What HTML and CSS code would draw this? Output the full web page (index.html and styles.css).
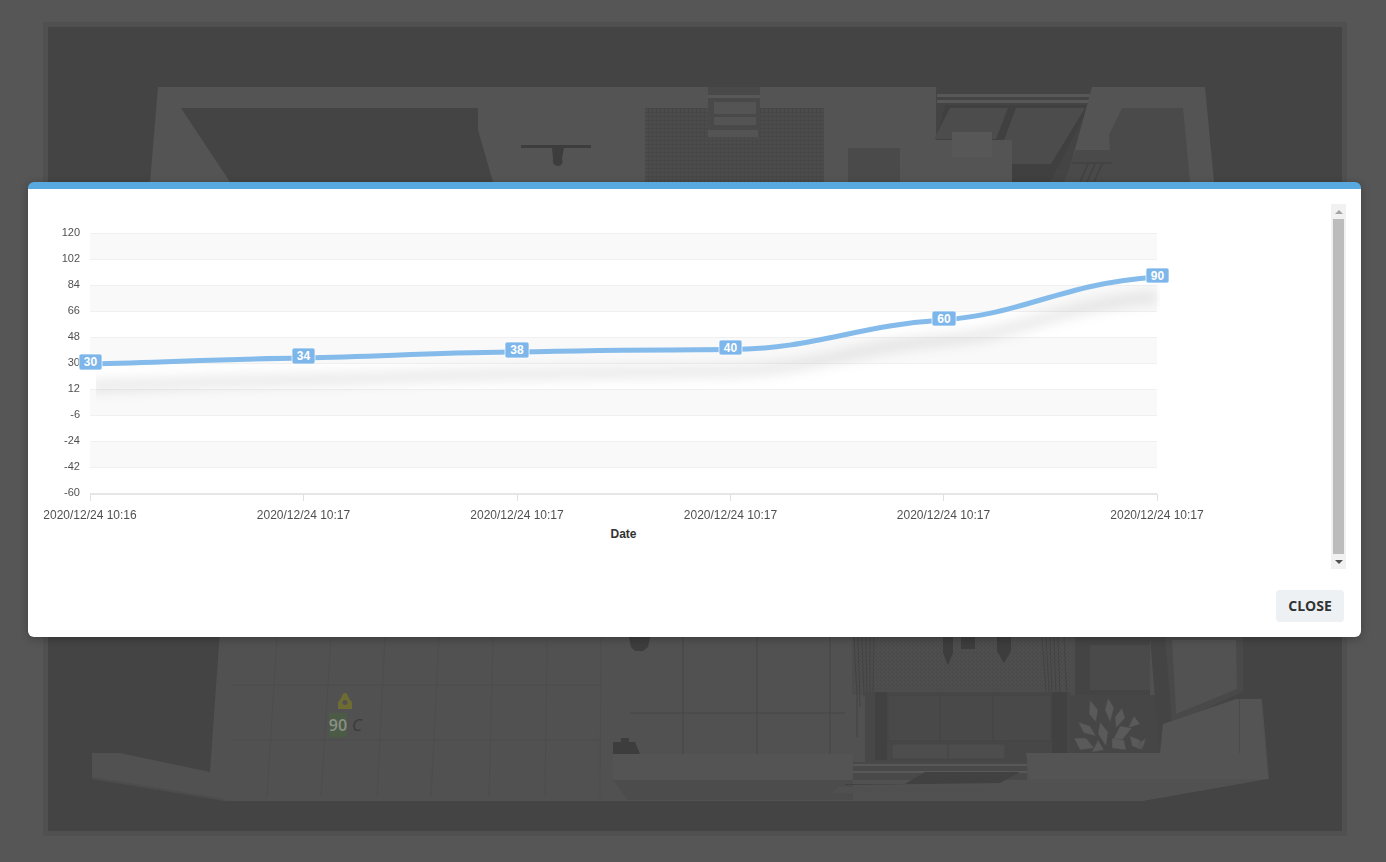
FILE: index.html
```html
<!DOCTYPE html>
<html lang="en">
<head>
<meta charset="utf-8">
<title>Sensor history</title>
<link rel="stylesheet" href="styles.css">
</head>
<body>
<main class="scene">
  <svg class="plan" viewBox="0 0 1386 862" width="1386" height="862" aria-hidden="true">
    <defs>
      <pattern id="tile" width="4" height="4" patternUnits="userSpaceOnUse">
        <rect class="tile-bg" width="4" height="4"/>
        <path class="tile-line" d="M0 .5H4M.5 0V4"/>
      </pattern>
      <pattern id="weave" width="4" height="4" patternUnits="userSpaceOnUse">
        <rect class="weave-bg" width="4" height="4"/>
        <path class="weave-line" d="M0 4L4 0M0 0L2 2"/>
      </pattern>
    </defs>
    <rect class="p-frame" x="43" y="22" width="1304" height="814"/>
    <rect class="p-ground" x="48" y="27" width="1294" height="804"/>

    <!-- far walls -->
    <polygon class="p-wall" points="158,87 708,87 708,182 150,182"/>
    <polygon class="p-ground" points="181,108 478,108 478,130 493,182 230,182"/>
    <rect class="p-dark" x="521" y="145" width="70" height="3"/>
    <path class="p-dark" d="M552 148h12l-2 10q2 8-4 8t-5-8z"/>
    <rect x="645" y="108" width="180" height="74" fill="url(#tile)"/>
    <rect class="p-wall" x="645" y="87" width="63" height="21"/>
    <polygon class="p-wall" points="760,87 936,87 948,182 760,182"/>
    <rect x="760" y="108" width="64" height="74" fill="url(#tile)"/>
    <rect class="p-mid" x="708" y="87" width="52" height="50"/>
    <rect class="p-strip" x="708" y="95" width="52" height="3"/>
    <rect class="p-wall" x="714" y="102" width="42" height="12"/>
    <rect class="p-wall" x="714" y="117" width="42" height="8"/>
    <rect class="p-wall" x="708" y="130" width="50" height="7"/>
    <rect class="p-floorbox" x="848" y="148" width="52" height="34"/>

    <rect class="p-ground" x="936" y="90" width="160" height="92"/>
    <rect class="p-strip" x="937" y="94" width="155" height="3"/>
    <rect class="p-strip" x="937" y="100" width="155" height="3"/>
    <polygon class="p-frame-dark" points="945,105 1090,105 1050,182 925,182"/>
    <polygon class="p-pane" points="950,108 1008,108 996,139 934,139"/>
    <polygon class="p-pane" points="1016,108 1085,108 1051,164 1012,164 1012,140 1004,140"/>
    <rect class="p-wall" x="900" y="140" width="112" height="42"/>
    <rect class="p-boxtop" x="952" y="132" width="40" height="25"/>
    <polygon class="p-wall" points="1092,87 1205,87 1214,182 1066,182"/>
    <polygon class="p-wood" points="1122,108 1183,108 1190,182 1112,182 1109,135"/>
    <polygon class="p-floorbox" points="1076,150 1112,150 1112,182 1064,182"/>
    <path class="p-strip-line" d="M1072 163h40M1080 182l8-18M1087 182l8-18M1094 182l8-18"/>

    <!-- floor -->
    <polygon class="p-floor" points="220,630 1245,630 1262,699 1269,779 1144,801 225,801 92,779 92,753 120,753 210,772"/>
    <polygon class="p-band" points="92,779 225,801 225,799 92,777"/>
    <rect class="p-ground" x="48" y="801" width="1294" height="30"/>
    <polygon class="p-ground" points="1144,801 1269,779 1269,801"/>
    <path class="p-grid" d="M277 637L267 797M331 637L321 797M385 637L377 797M439 637L431 797M493 637L489 797M547 637L545 797M601 637L600 797M232 685H600M232 740H600"/>
    <path class="p-grid-strong" d="M683 637V754M757 637V754M830 637V754M630 713H845"/>
    <path class="p-dark" d="M629 637h21l-2 10-5 4h-8l-4-4z"/>
    <path class="p-dark" d="M613 754v-12h8v-4h8v4h6l5 12z"/>

    <!-- living area -->
    <rect x="852" y="637" width="225" height="58" fill="url(#weave)"/>
    <path class="p-curtain" d="M854 637l3 60 0 40M858 637l2 70M862 637l2 60M866 637l1 60M870 637v60M874 637l-1 60M1042 637l4 55M1046 637l3 55M1050 637l2 60M1054 637l2 60M1058 637l2 60M1064 637l3 60"/>
    <path class="p-dark" d="M943 637h10v16l-5 12-5-12zM961 637h14v12h-14zM997 637h14v14l-7 12-7-12z"/>
    <rect class="p-sofa" x="865" y="692" width="206" height="70"/>
    <rect class="p-sofa-dark" x="875" y="692" width="12" height="68"/>
    <rect class="p-sofa-dark" x="1052" y="692" width="15" height="65"/>
    <rect class="p-cushion" x="888" y="695" width="52" height="46"/>
    <rect class="p-cushion" x="940" y="695" width="53" height="46"/>
    <rect class="p-cushion" x="993" y="695" width="58" height="46"/>
    <rect class="p-seat" x="892" y="744" width="56" height="15"/>
    <rect class="p-seat" x="948" y="744" width="57" height="15"/>
    <rect class="p-ground" x="1075" y="637" width="75" height="58"/>
    <rect class="p-alcove" x="1090" y="645" width="60" height="45"/>
    <rect class="p-alcove-dark" x="1070" y="695" width="90" height="58"/>
    <g class="p-leaves">
      <path d="M1090 700l8 10-2 12-7-8zM1108 698l6 10-4 14-5-12zM1122 708l3 10-9 10-1-11z"/>
      <path d="M1078 722l12 4 6 10-12-3zM1100 722l8 10-2 14-8-12zM1120 726l12 2-10 12-10 2zM1134 716l6 8-12 4z"/>
      <path d="M1074 738l12 0 8 10-14 2zM1098 740l6 10-12 2zM1112 738l12 2 2 10-14-2zM1130 736l10 4 2 10-10-4zM1146 738l-4 12-4-6z"/>
    </g>
    <polygon class="p-ground" points="1150,637 1255,637 1262,699 1236,699 1236,712 1160,760"/>
    <polygon class="p-mid" points="1165,637 1243,637 1243,692 1172,724"/>
    <polygon class="p-pane-light" points="1172,640 1236,640 1237,689 1176,714"/>
    <polygon class="p-wall" points="1163,724 1236,699 1261,699 1268,779 1030,779 1026,753 1160,753"/>
    <rect class="p-floorbox" x="1239" y="699" width="1" height="54"/>

    <!-- front walls and door -->
    <rect class="p-wall" x="613" y="754" width="240" height="26"/>
    <polygon class="p-band" points="613,780 853,780 853,800 628,800"/>
    <rect class="p-mid" x="853" y="762" width="174" height="18"/>
    <rect class="p-strip" x="853" y="764" width="174" height="2"/>
    <rect class="p-strip" x="853" y="771" width="174" height="2"/>
    <polygon class="p-glass" points="845,784 905,784 925,772 1020,772 1000,783 845,785"/>
    <polygon class="p-step" points="832,793 985,793 985,787 838,787"/>

    <!-- sensor -->
    <path class="p-lock" fill-rule="evenodd" d="M338 709v-6q0-2 2-3l3-6q2-2 4 0l3 6q2 1 2 3v6zM345 700a2.500 2.500 0 1 0 .01 0z"/>
    <rect class="p-badge" x="329" y="713" width="18" height="24"/>
    <text class="p-temp" x="338" y="731" text-anchor="middle">90</text>
    <text class="p-unit" x="352" y="731">C</text>
  </svg>

  <div class="overlay">
    <section class="modal">
      <div class="modal-body">
        <svg class="chart" viewBox="28 204 1303 365" width="1303" height="365">
          <defs>
            <filter id="soft" x="-5%" y="-60%" width="110%" height="260%">
              <feGaussianBlur stdDeviation="6"/>
            </filter>
            <clipPath id="shadow-clip"><rect x="96" y="220" width="1064" height="220"/></clipPath>
          </defs>
          <rect class="band" x="90" y="234" width="1067" height="26"/>
          <rect class="band" x="90" y="286" width="1067" height="26"/>
          <rect class="band" x="90" y="338" width="1067" height="26"/>
          <rect class="band" x="90" y="390" width="1067" height="26"/>
          <rect class="band" x="90" y="442" width="1067" height="26"/>
          <path class="grid" d="M90 233.500H1157M90 259.500H1157M90 285.500H1157M90 311.500H1157M90 337.500H1157M90 363.500H1157M90 389.500H1157M90 415.500H1157M90 441.500H1157M90 467.500H1157"/>
          <path class="axis" d="M90 494H1157"/>
          <path class="ticks" d="M90.500 494V501M303.500 494V501M517.500 494V501M730.500 494V501M943.500 494V501M1157.500 494V501"/>

          <g class="y-labels">
            <text x="80" y="236">120</text>
            <text x="80" y="262">102</text>
            <text x="80" y="288">84</text>
            <text x="80" y="314">66</text>
            <text x="80" y="340">48</text>
            <text x="80" y="366">30</text>
            <text x="80" y="392">12</text>
            <text x="80" y="418">-6</text>
            <text x="80" y="444">-24</text>
            <text x="80" y="470">-42</text>
            <text x="80" y="496">-60</text>
          </g>
          <g class="x-labels">
            <text x="90" y="519">2020/12/24 10:16</text>
            <text x="303.500" y="519">2020/12/24 10:17</text>
            <text x="517" y="519">2020/12/24 10:17</text>
            <text x="730.500" y="519">2020/12/24 10:17</text>
            <text x="943.500" y="519">2020/12/24 10:17</text>
            <text x="1157" y="519">2020/12/24 10:17</text>
          </g>
          <text class="x-title" x="623.500" y="538">Date</text>

          <g clip-path="url(#shadow-clip)">
            <path class="line-shadow" filter="url(#soft)" d="M90 386C175 384 218 381 303.500 380C389 378 431 375 517 374C602 372 645 372 730.500 371C815 370 858 345 943.500 340C1028 333 1060 304 1157 297"/>
          </g>
          <path class="line" d="M90 364C175 362 218 359 303.500 358C389 356 431 353 517 352C602 350 645 350 730.500 349.500C815 349 858 325 943.500 320C1028 313 1060 284 1157 277"/>

          <g class="point">
            <rect x="79" y="354" width="23" height="16" rx="2"/><text x="90.500" y="366">30</text>
          </g>
          <g class="point">
            <rect x="292" y="348" width="23" height="16" rx="2"/><text x="303.500" y="360">34</text>
          </g>
          <g class="point">
            <rect x="505" y="342" width="24" height="16" rx="2"/><text x="517" y="354">38</text>
          </g>
          <g class="point">
            <rect x="719" y="340" width="23" height="15" rx="2"/><text x="730.500" y="351.500">40</text>
          </g>
          <g class="point">
            <rect x="932" y="311" width="24" height="15" rx="2"/><text x="944" y="323">60</text>
          </g>
          <g class="point">
            <rect x="1146" y="268" width="23" height="15" rx="2"/><text x="1157.500" y="280">90</text>
          </g>
        </svg>
        <div class="scrollbar" aria-hidden="true">
          <span class="arrow arrow-up"></span>
          <span class="thumb"></span>
          <span class="arrow arrow-down"></span>
        </div>
      </div>
      <footer class="modal-footer">
        <button class="close" type="button">CLOSE</button>
      </footer>
    </section>
  </div>
</main>
</body>
</html>
```

FILE: styles.css
```css
* { box-sizing: border-box; }

html, body {
  margin: 0;
  padding: 0;
  background: #565656;
}

.scene {
  position: relative;
  width: 1386px;
  height: 862px;
  overflow: hidden;
  background: #565656;
  font-family: "Liberation Sans", Arial, sans-serif;
}

.plan { display: block; }

/* floor plan, already dimmed by the modal backdrop */
.p-frame { fill: #505050; }
.p-ground { fill: #444444; }
.p-wall { fill: #545454; }
.p-floor { fill: #515151; }
.p-band { fill: #4c4c4c; }
.p-dark { fill: #3d3d3d; }
.p-mid { fill: #494949; }
.p-strip { fill: #585858; }
.p-strip-line { fill: none; stroke: #414141; stroke-width: 1.500; }
.p-glass { fill: #414141; }
.p-step { fill: #505050; }
.p-floorbox { fill: #4a4a4a; }
.p-boxtop { fill: #575757; }
.p-wood { fill: #4a4a4a; }
.p-frame-dark { fill: #404040; }
.p-pane { fill: #4c4c4c; }
.p-pane-light { fill: #525252; }
.p-sofa { fill: #474747; }
.p-sofa-dark { fill: #414141; }
.p-cushion { fill: #494949; stroke: #444444; }
.p-seat { fill: #4d4d4d; stroke: #464646; }
.p-alcove { fill: #4a4a4a; }
.p-alcove-dark { fill: #464646; }
.p-leaves path { fill: #5a5a5a; stroke: #4b4b4b; stroke-width: .5; }
.p-curtain { fill: none; stroke: #434343; stroke-width: 1; }
.p-grid { fill: none; stroke: #4d4d4d; stroke-width: 1; }
.p-grid-strong { fill: none; stroke: #464646; stroke-width: 1; }
.tile-bg { fill: #4c4c4c; }
.tile-line { fill: none; stroke: #474747; stroke-width: 1; }
.weave-bg { fill: #4e4e4e; }
.weave-line { fill: none; stroke: #484848; stroke-width: .7; }
.p-lock { fill: #6e6c33; }
.p-badge { fill: #4b5b45; }
.p-temp {
  fill: #8b8f88;
  font-family: "Open Sans", sans-serif;
  font-size: 16px;
  font-weight: 600;
}
.p-unit {
  fill: #3a3a3a;
  font-family: "Open Sans", sans-serif;
  font-size: 17px;
  font-style: italic;
}

/* modal */
.overlay {
  position: absolute;
  inset: 0;
  padding: 182px 25px 0 28px;
}

.modal {
  display: flex;
  flex-direction: column;
  height: 455px;
  background: #ffffff;
  border-top: 7px solid #58a9e0;
  border-radius: 6px;
  box-shadow: 0 2px 8px rgba(0, 0, 0, .25);
}

.modal-body {
  display: flex;
  height: 380px;
  padding: 15px 15px 0 0;
}

.chart {
  display: block;
  flex: none;
}

.scrollbar {
  display: flex;
  flex: none;
  flex-direction: column;
  align-items: center;
  width: 15px;
  height: 365px;
  background: #f1f1f1;
}

.thumb {
  flex: 1;
  width: 11px;
  background: #bcbcbc;
}

.arrow {
  flex: none;
  width: 15px;
  height: 15px;
  display: flex;
  align-items: center;
  justify-content: center;
}

.arrow::before {
  content: "";
  border-left: 4px solid transparent;
  border-right: 4px solid transparent;
}

.arrow-up::before { border-bottom: 4px solid #a3a3a3; }
.arrow-down::before { border-top: 4px solid #505050; }

.modal-footer {
  display: flex;
  justify-content: flex-end;
  padding: 21px 17px 15px 0;
}

.close {
  width: 68px;
  height: 32px;
  padding: 0 0 2px;
  border: 0;
  border-radius: 4px;
  background: #eef1f3;
  color: #333333;
  font-family: "Open Sans", sans-serif;
  font-size: 14px;
  font-weight: 700;
}

/* chart */
.band { fill: #f9f9f9; }
.grid { fill: none; stroke: #f0f0f0; stroke-width: 1; }
.axis { fill: none; stroke: #e6e6e6; stroke-width: 2; }
.ticks { fill: none; stroke: #e0e0e0; stroke-width: 1; }

.y-labels,
.x-labels { opacity: .9; }

.y-labels text {
  fill: #3c3c3c;
  font-size: 11px;
  text-anchor: end;
}

.x-labels text {
  fill: #3c3c3c;
  font-size: 12px;
  text-anchor: middle;
}

.x-title {
  fill: #333333;
  font-size: 12px;
  font-weight: 700;
  text-anchor: middle;
}

.line {
  fill: none;
  stroke: #84bbeb;
  stroke-width: 5;
  stroke-linecap: round;
  stroke-linejoin: round;
}

.line-shadow {
  fill: none;
  stroke: #000000;
  stroke-opacity: .08;
  stroke-width: 13;
}

.point rect {
  fill: #7db6ea;
  stroke: #ffffff;
  stroke-opacity: .7;
  stroke-width: 1;
}

.point text {
  fill: #ffffff;
  font-size: 12px;
  font-weight: 700;
  text-anchor: middle;
}
```
